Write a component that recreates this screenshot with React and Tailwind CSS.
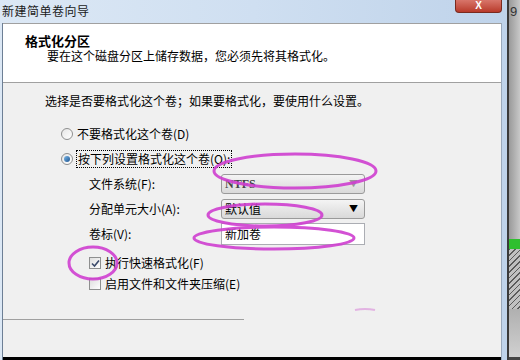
import React from "react";

const Radio = ({ checked }) => (
  <span className="w-[12px] h-[12px] rounded-full border border-[#8e8f8f] bg-gradient-to-br from-[#e6e6e6] to-white flex items-center justify-center shrink-0">
    {checked && (
      <span className="w-[6px] h-[6px] rounded-full bg-gradient-to-br from-[#7ab7e8] to-[#1d5590]" />
    )}
  </span>
);

const Check = ({ checked }) => (
  <span className="w-[12px] h-[12px] border border-[#8e8f8f] bg-gradient-to-br from-[#dedede] to-white flex items-center justify-center shrink-0">
    {checked && (
      <svg width="9" height="9" viewBox="0 0 9 9">
        <path d="M1 4.5 L3.5 7 L8 1.5" fill="none" stroke="#3b4a6b" strokeWidth="1.6" />
      </svg>
    )}
  </span>
);

const Select = ({ value, dim }) => (
  <div className="w-[144px] h-[20px] border border-[#9a9a9a] rounded-[3px] bg-gradient-to-b from-[#f4f4f4] to-[#d9d9d9] flex items-center pl-[3px] pr-[6px]">
    <span className={dim ? "text-[#444] font-['Liberation_Serif',serif] font-bold" : "text-black"}>{value}</span>
    <span className={`ml-auto text-[9px] ${dim ? "text-[#999]" : "text-black"}`}>▼</span>
  </div>
);

export default function App() {
  return (
    <div className="w-[520px] h-[360px] relative overflow-hidden flex bg-[#c9dbef] text-[12px] leading-4 text-black font-['Noto_Sans_CJK_SC','Noto_Sans',sans-serif]">
      {/* dialog */}
      <div className="w-[507px] flex flex-col bg-gradient-to-r from-[#dce8f5] via-[#cfdff1] to-[#bfd3ea]">
        {/* title bar */}
        <div className="h-[23px] flex items-start shrink-0">
          <span className="pl-[2px] pt-[3px] tracking-[0.5px] text-[#1a1a1a]">新建简单卷向导</span>
          <div className="ml-auto mr-[5px] w-[47px] h-[13px] rounded-b-[4px] border border-t-0 border-[#7a2a1e] bg-gradient-to-b from-[#d8756a] to-[#b8392a] flex items-center justify-center">
            <span className="text-white text-[10px] leading-[12px] font-bold font-['Liberation_Sans',sans-serif]">X</span>
          </div>
        </div>
        {/* frame */}
        <div className="flex-1 flex">
          <div className="w-[3px] border-r border-[#6d7f95]" />
          <div className="w-[499px] flex flex-col border-r border-[#9aa9bb]">
            {/* header */}
            <div className="h-[60px] bg-white border-b border-t border-[#a0a0a0] shrink-0">
              <div className="pl-[22px] pt-[9px] leading-[16px] font-bold text-[13px]">格式化分区</div>
              <div className="pl-[44px] leading-[14px]">要在这个磁盘分区上储存数据，您必须先将其格式化。</div>
            </div>
            {/* body */}
            <div className="flex-1 bg-[#f0f0f0] flex flex-col border-b-[3px] border-black">
              <div className="pl-[42px] pt-[10px]">选择是否要格式化这个卷；如果要格式化，要使用什么设置。</div>
              <div className="pl-[58px] mt-[17px] flex items-center gap-[4px]">
                <Radio />
                <span>不要格式化这个卷(D)</span>
              </div>
              <div className="pl-[58px] mt-[8px] flex items-center gap-[3px]">
                <Radio checked />
                <span className="border border-dotted border-black px-[1px]">按下列设置格式化这个卷(O):</span>
              </div>
              <div className="pl-[86px] mt-[6px] flex items-center">
                <span className="w-[132px]">文件系统(F):</span>
                <Select value="NTFS" dim />
              </div>
              <div className="pl-[86px] mt-[5px] flex items-center">
                <span className="w-[132px]">分配单元大小(A):</span>
                <Select value="默认值" />
              </div>
              <div className="pl-[86px] mt-[4px] flex items-center">
                <span className="w-[132px]">卷标(V):</span>
                <div className="w-[144px] h-[22px] border border-[#abadb3] bg-white pl-[3px] flex items-center">新加卷</div>
              </div>
              <div className="pl-[86px] mt-[10px] flex items-center gap-[4px]">
                <Check checked />
                <span>执行快速格式化(F)</span>
              </div>
              <div className="pl-[86px] mt-[5px] flex items-center gap-[4px]">
                <Check />
                <span>启用文件和文件夹压缩(E)</span>
              </div>
              <div className="mt-[27px] w-[241px] border-t border-[#a0a0a0]" />
            </div>
          </div>
          <div className="w-[4px]" />
        </div>
      </div>
      {/* right edge strip */}
      <div className="w-[13px] border-l-2 border-[#3a3a3a] bg-gradient-to-r from-[#9a9a9a] to-[#c8c8c8] flex flex-col">
        <span className="pt-[4px] pl-[1px] text-[13px] text-[#333] font-['Liberation_Sans',sans-serif]">9</span>
        <div className="mt-[219px] h-[10px] bg-[#2fbf2f]" />
        <div className="h-[60px] bg-[repeating-linear-gradient(135deg,#5a5a5a_0px,#5a5a5a_1px,#c0c0c0_1px,#c0c0c0_4px)]" />
        <div className="flex-1 bg-gradient-to-b from-[#b0b0b0] to-[#d0d0d0] border-b-[3px] border-[#444]" />
      </div>
      {/* pink annotations */}
      <svg className="absolute inset-0 pointer-events-none" width="520" height="360">
        <g fill="none" stroke="#cf3fd0" strokeWidth="3" opacity="0.9">
          <ellipse cx="295" cy="171" rx="81" ry="17" />
          <ellipse cx="265" cy="215" rx="57" ry="11" />
          <ellipse cx="274" cy="238" rx="80" ry="11" />
          <ellipse cx="93" cy="263" rx="24" ry="16" />
        </g>
        <path d="M355 310 Q365 308 375 310" stroke="#d88ad8" strokeWidth="2" fill="none" opacity="0.6" />
      </svg>
    </div>
  );
}
